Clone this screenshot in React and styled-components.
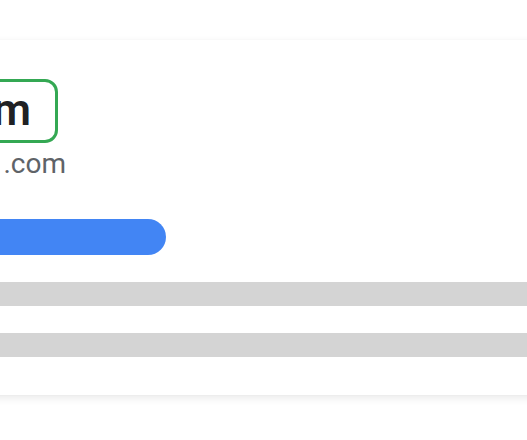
import styled, { createGlobalStyle } from 'styled-components';

const GlobalStyle = createGlobalStyle`
  html, body {
    margin: 0;
    padding: 0;
    background: #ffffff;
    overflow: hidden;
    font-family: Roboto, "Noto Sans", Arial, sans-serif;
  }
`;

const Page = styled.div`
  padding-top: 40px;
  height: 440px;
  box-sizing: border-box;
`;

const Card = styled.div`
  margin: 0 -60px 0 -60px;
  padding: 39px 0 38px 20px;
  background: #ffffff;
  box-shadow: 0 0 1px rgba(0, 0, 0, 0.06), 0 3px 8px rgba(0, 0, 0, 0.09);
  display: flex;
  flex-direction: column;
  align-items: flex-start;
`;

const NameBox = styled.div`
  box-sizing: border-box;
  width: 98px;
  height: 64px;
  padding: 0 24px 2px 0;
  border: 3px solid #34a853;
  border-radius: 13px;
  display: flex;
  justify-content: flex-end;
  font-size: 44px;
  font-weight: 600;
  line-height: 56px;
  color: #202124;
  white-space: nowrap;
`;

const Email = styled.div`
  width: 106px;
  margin-top: 4px;
  display: flex;
  justify-content: flex-end;
  font-size: 28px;
  color: #5f6368;
  white-space: nowrap;
`;

const Pill = styled.div`
  width: 206px;
  height: 36px;
  margin-top: 39px;
  border-radius: 18px;
  background: #4285f4;
`;

const Line = styled.div`
  align-self: stretch;
  height: 24px;
  margin-top: ${(p) => p.$gap}px;
  background: #d4d4d4;
`;

export default function App() {
  return (
    <Page>
      <GlobalStyle />
      <Card>
        <NameBox>Sam</NameBox>
        <Email>.com</Email>
        <Pill />
        <Line $gap={27} />
        <Line $gap={27} />
      </Card>
    </Page>
  );
}
